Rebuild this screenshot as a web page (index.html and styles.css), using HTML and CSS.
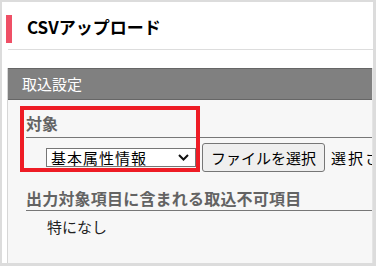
FILE: index.html
```html
<!DOCTYPE html>
<html lang="ja">
<head>
<meta charset="utf-8">
<title>CSVアップロード</title>
<link rel="stylesheet" href="styles.css">
</head>
<body>
<div class="page">
  <div class="title">
    <span class="title-bar"></span>
    <h1 class="title-text">CSVアップロード</h1>
  </div>
  <div class="rule"></div>
  <section class="panel">
    <h2 class="panel-head">取込設定</h2>
    <div class="panel-body">
      <div class="field-label">対象</div>
      <div class="field-row">
        <div class="select">
          <span class="select-text">基本属性情報</span>
          <svg class="chev" width="11" height="7" viewBox="0 0 11 7"><path d="M1 1 L5.5 5.5 L10 1" fill="none" stroke="#111" stroke-width="2"/></svg>
        </div>
        <button class="file-btn" type="button">ファイルを選択</button>
        <span class="file-name">選択されていません</span>
      </div>
      <div class="field-label second">出力対象項目に含まれる取込不可項目</div>
      <div class="field-value">特になし</div>
    </div>
  </section>
  <div class="highlight"></div>
</div>
</body>
</html>
```

FILE: styles.css
```css
html, body {
  margin: 0;
  padding: 0;
}
body {
  background: #dcdcdc;
  font-family: "Liberation Sans", "Noto Sans CJK JP", sans-serif;
  width: 376px;
  height: 266px;
  overflow: hidden;
}
.page {
  position: relative;
  margin: 2px 3px 0 2px;
  height: 261px;
  background: #fff;
  overflow: hidden;
  display: flex;
  flex-direction: column;
}
.title {
  display: flex;
  align-items: flex-start;
  padding-top: 13px;
}
.title-bar {
  width: 6px;
  height: 28px;
  margin-left: 4px;
  background: #ef5066;
}
.title-text {
  margin: 0 0 0 15px;
  font-size: 17px;
  line-height: 24px;
  font-weight: bold;
  color: #000;
  font-family: "Noto Sans CJK JP", sans-serif;
}
.rule {
  margin: 6px 0 0 6px;
  border-top: 1px solid #dddddd;
}
.panel {
  flex: 1;
  margin: 18px 0 0 5px;
  border-left: 1px solid #d6d6d6;
  border-right: 1px solid #e4e4e4;
  background: #f7f7f7;
  display: flex;
  flex-direction: column;
  overflow: hidden;
}
.panel-head {
  margin: 0;
  height: 30px;
  border-top: 1px solid #666;
  border-bottom: 1px solid #666;
  background: #808080;
  color: #fff;
  font-weight: normal;
  font-size: 15px;
  line-height: 30px;
  padding-left: 14px;
  font-family: "Noto Sans CJK JP", sans-serif;
}
.panel-body {
  padding-left: 18px;
  font-family: "Noto Sans CJK JP", sans-serif;
}
.field-label {
  margin-top: 12px;
  font-size: 16px;
  line-height: 22px;
  font-weight: bold;
  color: #636363;
  padding-bottom: 3px;
  border-bottom: 1px solid #777;
  white-space: nowrap;
}
.field-label.second {
  margin-top: 15px;
  padding-bottom: 1px;
  letter-spacing: 0.2px;
}
.field-row {
  display: flex;
  align-items: center;
  margin: 5px 0 0 20px;
  white-space: nowrap;
}
.select {
  flex: 0 0 auto;
  box-sizing: border-box;
  width: 150px;
  height: 19px;
  border: 1px solid #767676;
  background: #fff;
  display: flex;
  align-items: center;
  justify-content: space-between;
  padding: 0 6px 0 4px;
}
.select-text {
  font-size: 15px;
  line-height: 17px;
  letter-spacing: 1px;
  color: #000;
}
.chev {
  display: block;
  flex: 0 0 auto;
}
.file-btn {
  flex: 0 0 auto;
  box-sizing: border-box;
  margin-left: 6px;
  height: 29px;
  padding: 0 8px;
  border: 1px solid #767676;
  border-radius: 3px;
  background: #efefef;
  font-family: "Noto Sans CJK JP", sans-serif;
  font-size: 15px;
  line-height: 27px;
  color: #000;
}
.file-name {
  flex: 0 0 auto;
  margin-left: 6px;
  font-size: 15px;
  letter-spacing: 2px;
  color: #000;
}
.field-value {
  margin: 6px 0 0 21px;
  font-size: 15px;
  line-height: 20px;
  color: #222;
}
.highlight {
  position: absolute;
  left: 18px;
  top: 104px;
  width: 180px;
  height: 66px;
  box-sizing: border-box;
  border: 4px solid #ee1c25;
}
```
